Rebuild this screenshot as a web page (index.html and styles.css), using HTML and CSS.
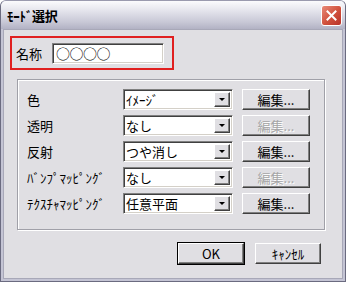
FILE: index.html
```html
<!DOCTYPE html>
<html lang="ja">
<head>
  <meta charset="UTF-8">
  <title>ﾓｰﾄﾞ選択</title>
  <link rel="stylesheet" href="styles.css">
</head>
<body>
  <div class="window">
    <div class="titlebar">
      <span class="title">ﾓｰﾄﾞ選択</span>
      <span class="close">
        <svg width="11" height="11" viewBox="0 0 11 11">
          <path d="M1.5 1.5 L9.5 9.5 M9.5 1.5 L1.5 9.5" stroke="#fff" stroke-width="2" stroke-linecap="square"/>
        </svg>
      </span>
    </div>

    <div class="client">
      <div class="name-box">
        <label>名称</label>
        <div class="edit">○○○○</div>
      </div>

      <div class="group">
        <div class="row">
          <span class="label">色</span>
          <div class="combo"><span class="value">ｲﾒｰｼﾞ</span><span class="arrow"></span></div>
          <button class="btn">編集...</button>
        </div>
        <div class="row">
          <span class="label">透明</span>
          <div class="combo"><span class="value">なし</span><span class="arrow"></span></div>
          <button class="btn" disabled>編集...</button>
        </div>
        <div class="row">
          <span class="label">反射</span>
          <div class="combo"><span class="value">つや消し</span><span class="arrow"></span></div>
          <button class="btn">編集...</button>
        </div>
        <div class="row">
          <span class="label">ﾊﾞﾝﾌﾟﾏｯﾋﾟﾝｸﾞ</span>
          <div class="combo"><span class="value">なし</span><span class="arrow"></span></div>
          <button class="btn" disabled>編集...</button>
        </div>
        <div class="row">
          <span class="label">ﾃｸｽﾁｬﾏｯﾋﾟﾝｸﾞ</span>
          <div class="combo"><span class="value">任意平面</span><span class="arrow"></span></div>
          <button class="btn">編集...</button>
        </div>
      </div>

      <div class="footer">
        <button class="btn btn-default">OK</button>
        <button class="btn">ｷｬﾝｾﾙ</button>
      </div>
    </div>
  </div>
</body>
</html>
```

FILE: styles.css
```css
* {
  box-sizing: border-box;
}

body {
  margin: 0;
  font-family: "Noto Sans CJK JP", "DejaVu Sans", sans-serif;
  font-size: 13px;
  color: #000;
  background: #fff;
}

.window {
  width: 346px;
  height: 282px;
  border: 1px solid #6b6b80;
  border-top-color: #9a9aae;
  padding: 0 2px 2px;
  background: #c4c4d4;
  border-radius: 6px 6px 0 0;
  display: flex;
  flex-direction: column;
}

.titlebar {
  height: 28px;
  margin: 0 -2px;
  padding: 0 3px 0 6px;
  border-radius: 5px 5px 0 0;
  background: linear-gradient(#fbfbfd, #e4e4ec 35%, #c8c8d6 75%, #b2b2c4);
  display: flex;
  align-items: center;
  justify-content: space-between;
}

.title {
  font-weight: bold;
  font-size: 13px;
  color: #000;
  letter-spacing: -0.3px;
}

.close {
  width: 21px;
  height: 21px;
  border: 1px solid #fff;
  border-radius: 3px;
  background: linear-gradient(135deg, #e88a78, #d0503c 55%, #b8322a);
  display: flex;
  align-items: center;
  justify-content: center;
}

.client {
  flex: 1;
  background: #e0dfe3;
  border: 1px solid #a8a8b8;
  padding: 6px 0 0 6px;
}

.name-box {
  width: 164px;
  height: 34px;
  border: 2px solid #e02020;
  display: flex;
  align-items: center;
  padding-left: 4px;
  gap: 6px;
}

.name-box label {
  width: 30px;
}

.edit {
  width: 112px;
  height: 21px;
  background: #fff;
  border-top: 1px solid #808080;
  border-left: 1px solid #808080;
  border-bottom: 1px solid #fff;
  border-right: 1px solid #fff;
  box-shadow: inset 1px 1px 0 #404040, inset -1px -1px 0 #d4d0c8;
  padding: 0 3px;
  line-height: 19px;
  font-size: 14px;
  letter-spacing: -0.5px;
}

.group {
  margin: 9px 0 0 7px;
  width: 308px;
  height: 151px;
  border: 1px solid #a0a0a8;
  box-shadow: inset 1px 1px 0 #fff, 1px 1px 0 #fff;
  padding: 9px 0 0 9px;
  display: flex;
  flex-direction: column;
  gap: 5px;
}

.row {
  display: flex;
  align-items: center;
  height: 21px;
}

.label {
  width: 96px;
  white-space: nowrap;
}

.combo {
  width: 110px;
  height: 21px;
  background: #fff;
  border-top: 1px solid #808080;
  border-left: 1px solid #808080;
  border-bottom: 1px solid #fff;
  border-right: 1px solid #fff;
  box-shadow: inset 1px 1px 0 #404040, inset -1px -1px 0 #d4d0c8;
  display: flex;
  align-items: center;
  padding: 2px 2px 2px 2px;
}

.value {
  flex: 1;
  font-size: 13px;
  white-space: nowrap;
}

.arrow {
  width: 16px;
  height: 15px;
  background: #e0dfe3;
  border-top: 1px solid #fff;
  border-left: 1px solid #fff;
  border-right: 1px solid #404040;
  border-bottom: 1px solid #404040;
  box-shadow: inset -1px -1px 0 #808080;
  position: relative;
}

.arrow::after {
  content: "";
  position: absolute;
  left: 4px;
  top: 5px;
  border-left: 3px solid transparent;
  border-right: 3px solid transparent;
  border-top: 3px solid #000;
}

.btn {
  width: 68px;
  height: 21px;
  margin-left: 9px;
  padding: 0;
  font-family: inherit;
  font-size: 13px;
  color: #000;
  background: #e0dfe3;
  border-top: 1px solid #fff;
  border-left: 1px solid #fff;
  border-right: 1px solid #404040;
  border-bottom: 1px solid #404040;
  box-shadow: inset -1px -1px 0 #808080;
}

.btn:disabled {
  color: #a6a6a6;
  text-shadow: 1px 1px 0 #fff;
}

.footer {
  display: flex;
  gap: 11px;
  margin: 13px 0 0 168px;
}

.footer .btn {
  width: 66px;
  margin: 0;
}

.btn-default {
  outline: 1px solid #000;
}
```
